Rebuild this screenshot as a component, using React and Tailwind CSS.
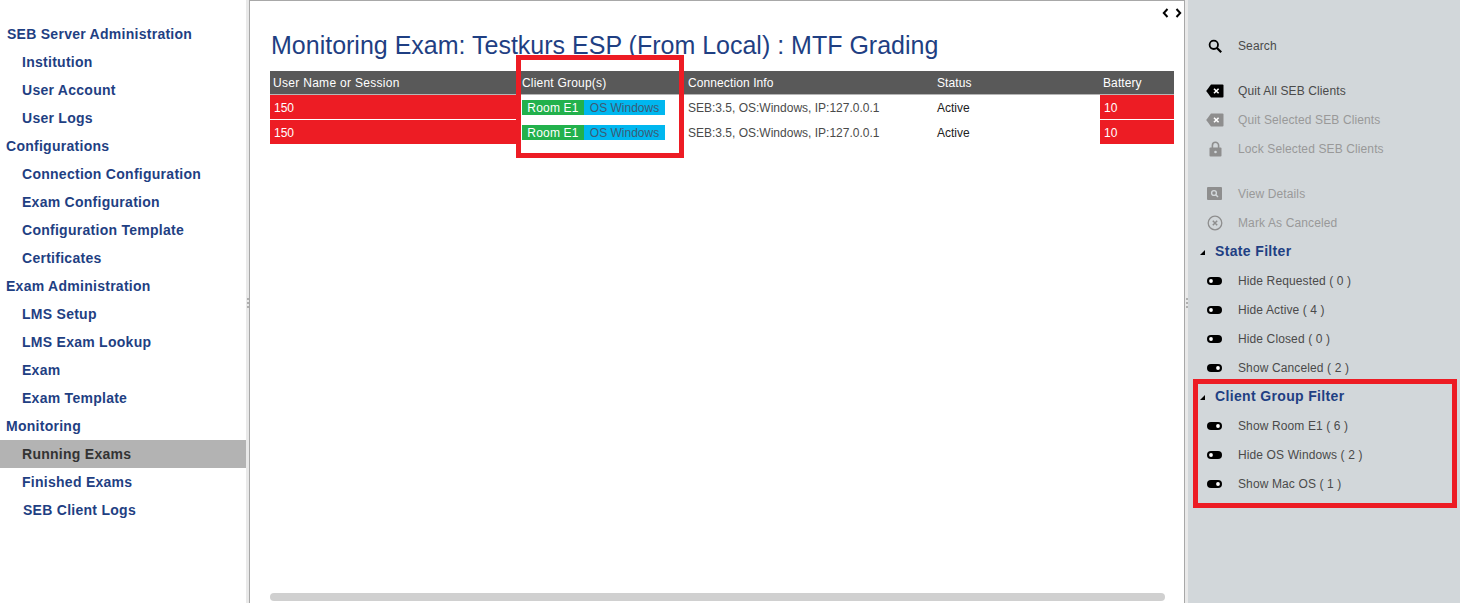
const navItems = [
  { label: 'SEB Server Administration', root: true, nudge: true },
  { label: 'Institution' },
  { label: 'User Account' },
  { label: 'User Logs' },
  { label: 'Configurations', root: true },
  { label: 'Connection Configuration' },
  { label: 'Exam Configuration' },
  { label: 'Configuration Template' },
  { label: 'Certificates' },
  { label: 'Exam Administration', root: true },
  { label: 'LMS Setup' },
  { label: 'LMS Exam Lookup' },
  { label: 'Exam' },
  { label: 'Exam Template' },
  { label: 'Monitoring', root: true },
  { label: 'Running Exams', active: true },
  { label: 'Finished Exams' },
  { label: 'SEB Client Logs', nudge: true },
]

function SearchIcon() {
  return (
    <svg width="16" height="16" viewBox="0 0 16 16" fill="none" stroke="#000" strokeWidth="1.8">
      <circle cx="6.8" cy="6.8" r="4.2" />
      <path d="M10 10l4.2 4.2" strokeWidth="2.2" />
    </svg>
  )
}

function QuitIcon({ color }) {
  return (
    <svg width="18" height="14" viewBox="0 0 18 14" className="-ml-px">
      <path d="M5 0.5h11.5a1 1 0 0 1 1 1v11a1 1 0 0 1-1 1H5L0.2 7z" fill={color} />
      <path d="M8 4.7l4.6 4.6M12.6 4.7l-4.6 4.6" stroke="#fff" strokeWidth="1.6" />
    </svg>
  )
}

function LockIcon() {
  return (
    <svg width="13" height="16" viewBox="0 0 13 16" className="ml-[2px]">
      <path d="M3.4 7V4.4a3.1 3.1 0 0 1 6.2 0V7" fill="none" stroke="#8e8e8e" strokeWidth="1.6" />
      <rect x="0.5" y="6.5" width="12" height="9" rx="1" fill="#8e8e8e" />
      <circle cx="6.5" cy="11" r="1.3" fill="#d2d7da" />
    </svg>
  )
}

function DetailsIcon() {
  return (
    <svg width="15" height="13" viewBox="0 0 15 13">
      <rect width="15" height="13" rx="1" fill="#8e8e8e" />
      <circle cx="7" cy="6" r="2.4" fill="none" stroke="#d2d7da" strokeWidth="1.4" />
      <path d="M8.8 7.8l2.2 2.2" stroke="#d2d7da" strokeWidth="1.5" />
    </svg>
  )
}

function CancelIcon() {
  return (
    <svg width="16" height="16" viewBox="0 0 16 16" fill="none" stroke="#8e8e8e">
      <circle cx="8" cy="8" r="6.8" strokeWidth="1.3" />
      <path d="M5.8 5.8l4.4 4.4M10.2 5.8l-4.4 4.4" strokeWidth="1.5" />
    </svg>
  )
}

function ToggleIcon({ on }) {
  return (
    <svg width="15" height="8" viewBox="0 0 15 8">
      <rect width="15" height="8" rx="4" fill="#000" />
      <circle cx={on ? 11 : 4} cy="4" r="1.9" fill="#fff" />
    </svg>
  )
}

function ActionRow({ icon, label, disabled }) {
  return (
    <div className="flex items-center h-[29px]">
      <div className="w-[50px] pl-[19px] flex items-center shrink-0">{icon}</div>
      <span className={`text-[12px] tracking-[0.12px] ${disabled ? 'text-[#999999]' : 'text-[#4a4a4a]'}`}>{label}</span>
    </div>
  )
}

function FilterHeader({ label }) {
  return (
    <div className="flex items-center h-[29px] pl-[12px]">
      <svg width="5" height="5" viewBox="0 0 5 5" className="mr-[10px] mt-[2px]">
        <path d="M5 0v5H0z" fill="#000" />
      </svg>
      <span className="text-[14px] font-bold tracking-[0.35px] text-[#1f3f83]">{label}</span>
    </div>
  )
}

function GripDots() {
  return (
    <div className="flex flex-col gap-[2px] items-center pt-[3px]">
      <span className="w-[2px] h-[2px] bg-[#b0b0b0]" />
      <span className="w-[2px] h-[2px] bg-[#b0b0b0]" />
      <span className="w-[2px] h-[2px] bg-[#b0b0b0]" />
    </div>
  )
}

function Row() {
  return (
    <div className="flex h-[25px] text-[12px] border-b border-white">
      <div className="w-[247px] bg-[#ed1c24] text-white pl-[4px] pt-[2px] flex items-center">150</div>
      <div className="w-[168px] pl-[5px] pt-[1px] flex items-center">
        <span className="bg-[#22b14c] text-white h-[15px] w-[62px] tracking-[0.2px] flex items-center justify-center">Room E1</span>
        <span className="bg-[#00b7ef] text-[#3d5a75] h-[15px] w-[81px] flex items-center justify-center">OS Windows</span>
      </div>
      <div className="w-[248px] pl-[3px] pt-[2px] flex items-center text-[#4a4a4a]">SEB:3.5, OS:Windows, IP:127.0.0.1</div>
      <div className="w-[167px] pl-[4px] pt-[2px] flex items-center text-[#222222]">Active</div>
      <div className="w-[74px] bg-[#ed1c24] text-white pl-[4px] pt-[2px] flex items-center">10</div>
    </div>
  )
}

export default function App() {
  return (
    <div className="relative flex h-screen overflow-hidden bg-white font-['Liberation_Sans',Arial,sans-serif]">
      {/* Left nav */}
      <div className="w-[246px] shrink-0 pt-[20px]">
        {navItems.map(item => (
          <div
            key={item.label}
            className={`h-[28px] flex items-center text-[14px] font-bold tracking-[0.27px] ${item.root ? 'pl-[6px]' : 'pl-[22px]'} ${item.active ? 'bg-[#b3b3b3] text-[#333333]' : 'text-[#1f3f83]'}`}
          >
            <span className={item.nudge ? 'ml-px' : ''}>{item.label}</span>
          </div>
        ))}
      </div>

      <div className="w-[3px] shrink-0 bg-[#e9e9e9] flex items-center justify-center">
        <GripDots />
      </div>

      {/* Main */}
      <div className="w-[936px] shrink-0 border-x border-t border-[#a8a8a8] flex flex-col">
        <div className="flex justify-end pr-[2px] pt-[7px] h-[20px] gap-[6px]">
          <svg width="7" height="10" viewBox="0 0 7 10" fill="none" stroke="#000" strokeWidth="2"><path d="M5.5 1L1.8 5l3.7 4" /></svg>
          <svg width="7" height="10" viewBox="0 0 7 10" fill="none" stroke="#000" strokeWidth="2"><path d="M1.5 1l3.7 4-3.7 4" /></svg>
        </div>
        <div className="pl-[21px] h-[50px] flex items-center text-[25px] text-[#1f3f83] whitespace-nowrap">
          Monitoring Exam: Testkurs ESP (From Local) : MTF Grading
        </div>
        <div className="ml-[20px] w-[904px]">
          <div className="flex h-[24px] bg-[#595959] border-b border-[#b5b5b5] text-[12px] text-white tracking-[0.1px]">
            <div className="w-[247px] pl-[3px] flex items-center tracking-[0.3px]">User Name or Session</div>
            <div className="w-[168px] pl-[5px] flex items-center tracking-[0.2px]">Client Group(s)</div>
            <div className="w-[248px] pl-[3px] flex items-center">Connection Info</div>
            <div className="w-[167px] pl-[4px] flex items-center">Status</div>
            <div className="w-[74px] pl-[3px] flex items-center">Battery</div>
          </div>
          <Row />
          <Row />
        </div>
        <div className="mt-auto mb-[2px] ml-[20px] w-[895px] h-[8px] rounded-full bg-[#d0d0d0]" />
      </div>

      <div className="w-[3px] shrink-0 bg-[#e9e9e9] flex items-center justify-center">
        <GripDots />
      </div>

      {/* Right actions */}
      <div className="flex-1 bg-[#d2d7da] pt-[31px]">
        <ActionRow icon={<SearchIcon />} label="Search" />
        <div className="h-[16px]" />
        <ActionRow icon={<QuitIcon color="#000" />} label="Quit All SEB Clients" />
        <ActionRow icon={<QuitIcon color="#8e8e8e" />} label="Quit Selected SEB Clients" disabled />
        <ActionRow icon={<LockIcon />} label="Lock Selected SEB Clients" disabled />
        <div className="h-[16px]" />
        <ActionRow icon={<DetailsIcon />} label="View Details" disabled />
        <ActionRow icon={<CancelIcon />} label="Mark As Canceled" disabled />
        <FilterHeader label="State Filter" />
        <ActionRow icon={<ToggleIcon />} label="Hide Requested ( 0 )" />
        <ActionRow icon={<ToggleIcon />} label="Hide Active ( 4 )" />
        <ActionRow icon={<ToggleIcon />} label="Hide Closed ( 0 )" />
        <ActionRow icon={<ToggleIcon on />} label="Show Canceled ( 2 )" />
        <FilterHeader label="Client Group Filter" />
        <ActionRow icon={<ToggleIcon on />} label="Show Room E1 ( 6 )" />
        <ActionRow icon={<ToggleIcon />} label="Hide OS Windows ( 2 )" />
        <ActionRow icon={<ToggleIcon on />} label="Show Mac OS ( 1 )" />
      </div>

      {/* Red annotation boxes drawn over the screenshot */}
      <div className="absolute left-[516px] top-[55px] w-[168px] h-[103px] border-[5px] border-[#ed1c24]" />
      <div className="absolute left-[1193px] top-[379px] w-[264px] h-[129px] border-[5px] border-[#ed1c24]" />
    </div>
  )
}
